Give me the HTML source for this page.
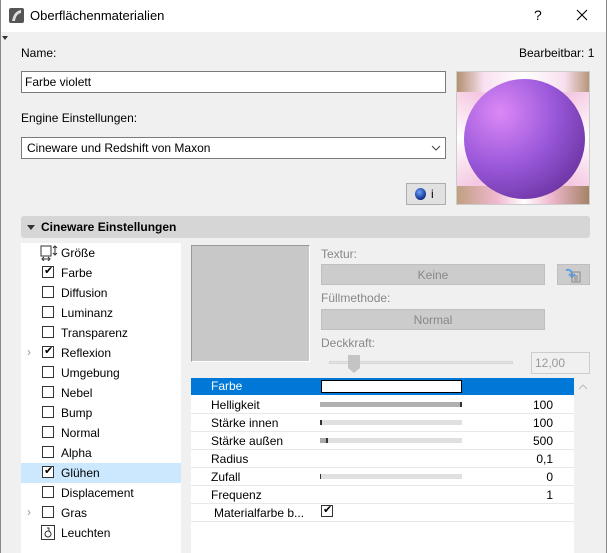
<!DOCTYPE html>
<html><head><meta charset="utf-8"><style>
*{margin:0;padding:0;box-sizing:border-box}
body{width:607px;height:553px;overflow:hidden;background:#f0f0f0;font-family:"Segoe UI","Liberation Sans",sans-serif;font-size:12px;color:#000;position:relative}
.a{position:absolute}
.lbl{position:absolute;font-size:12px;line-height:14px}
.cb{position:absolute;left:42px;width:12px;height:12px;border:1px solid #333;background:#fff}
.li{position:absolute;left:61px;font-size:12px}
.ck{position:absolute;left:44px;font-size:11px}
.row{position:absolute;left:191px;width:383px;height:18px;border-bottom:1px solid #e8e8e8}
.row span{position:absolute;left:20px;top:2px}
.row .v{left:auto;right:21px}
.bar{position:absolute;left:129px;top:6px;width:142px;height:5px;background:#e0e0e0}
</style></head><body>
<div class="a" style="left:0;top:0;width:607px;height:32px;background:#fff"></div>
<div class="a" style="left:0;top:0;width:1px;height:553px;background:#888"></div>
<div class="a" style="left:606px;top:0;width:1px;height:553px;background:#888"></div>
<svg class="a" style="left:9px;top:8px" width="15" height="15"><rect width="15" height="15" rx="2" fill="#555"/><path d="M3 13 Q5 3 12 2 L12 5 Q7 6 6 13Z" fill="#ddd"/></svg>
<div class="lbl" style="left:30px;top:9px;font-size:13px">Oberflächenmaterialien</div>
<div class="lbl" style="left:534px;top:8px;font-size:14px">?</div>
<svg class="a" style="left:576px;top:9px" width="12" height="12"><path d="M1 1L11 11M11 1L1 11" stroke="#000" stroke-width="1.1"/></svg>
<div class="a" style="left:2px;top:36px;width:0;height:0;border-left:3px solid transparent;border-right:3px solid transparent;border-top:4px solid #333"></div>
<div class="lbl" style="left:21px;top:46px">Name:</div>
<div class="lbl" style="left:519px;top:46px">Bearbeitbar: 1</div>
<div class="a" style="left:21px;top:71px;width:425px;height:22px;background:#fff;border:1px solid #7a7a7a"></div>
<div class="lbl" style="left:25px;top:75px">Farbe violett</div>
<div class="lbl" style="left:21px;top:111px">Engine Einstellungen:</div>
<div class="a" style="left:21px;top:137px;width:425px;height:22px;background:#fff;border:1px solid #7a7a7a"></div>
<div class="lbl" style="left:27px;top:141px">Cineware und Redshift von Maxon</div>
<svg class="a" style="left:431px;top:144px" width="10" height="8"><path d="M1 2 L5 6 L9 2" stroke="#444" fill="none"/></svg>
<div class="a" style="left:456px;top:71px;width:134px;height:134px;border:1px solid #ccc;overflow:hidden;background:conic-gradient(from 45deg at 50% 50%,#f4c6e0,#fff,#f4c6e0,#fff,#f4c6e0,#fff,#f4c6e0,#fff,#f4c6e0)">
<div class="a" style="left:0;top:0;width:134px;height:20px;background:linear-gradient(90deg,#b39070,#f8e0f0 20%,#fff 50%,#f8e0f0 80%,#b39070)"></div>
<div class="a" style="left:0;top:114px;width:134px;height:20px;background:linear-gradient(90deg,#c0a080,#f0b8d0 30%,#fff 50%,#f0b8d0 70%,#a08060)"></div>
<div class="a" style="left:7px;top:7px;width:121px;height:120px;border-radius:50%;background:radial-gradient(circle at 30% 28%,#dc88f6,#9a58da 45%,#7038a8 78%,#3e1860)"></div>
</div>
<div class="a" style="left:406px;top:183px;width:40px;height:22px;background:#e1e1e1;border:1px solid #adadad"></div>
<div class="a" style="left:415px;top:188px;width:11px;height:12px;border-radius:50%;background:radial-gradient(circle at 40% 35%,#6aa0ff,#10308a 70%,#000)"></div>
<div class="lbl" style="left:431px;top:187px">i</div>
<div class="a" style="left:21px;top:216px;width:569px;height:22px;background:#d6d6d6;border-radius:3px"></div>
<div class="a" style="left:27px;top:225px;width:0;height:0;border-left:4px solid transparent;border-right:4px solid transparent;border-top:5px solid #333"></div>
<div class="lbl" style="left:41px;top:220px;font-weight:bold">Cineware Einstellungen</div>
<div class="a" style="left:21px;top:243px;width:160px;height:310px;background:#fff"></div>
<div class="a" style="left:21px;top:463px;width:160px;height:20px;background:#cce8ff"></div>
<svg class="a" style="left:40px;top:245px" width="18" height="16"><rect x="1" y="1" width="10" height="10" fill="none" stroke="#333"/><path d="M15 1v9M13 3l2-2 2 2M13 8l2 2 2-2M2 14h8M4 12l-2 2 2 2M8 12l2 2-2 2" stroke="#333" fill="none"/></svg>
<div class="li" style="top:246px">Größe</div>
<div class="cb" style="top:266px"></div><div class="ck" style="top:264px">✔</div><div class="li" style="top:266px">Farbe</div>
<div class="cb" style="top:286px"></div><div class="li" style="top:286px">Diffusion</div>
<div class="cb" style="top:306px"></div><div class="li" style="top:306px">Luminanz</div>
<div class="cb" style="top:326px"></div><div class="li" style="top:326px">Transparenz</div>
<div class="li" style="left:27px;top:345px;color:#999">›</div>
<div class="cb" style="top:346px"></div><div class="ck" style="top:344px">✔</div><div class="li" style="top:346px">Reflexion</div>
<div class="cb" style="top:366px"></div><div class="li" style="top:366px">Umgebung</div>
<div class="cb" style="top:386px"></div><div class="li" style="top:386px">Nebel</div>
<div class="cb" style="top:406px"></div><div class="li" style="top:406px">Bump</div>
<div class="cb" style="top:426px"></div><div class="li" style="top:426px">Normal</div>
<div class="cb" style="top:446px"></div><div class="li" style="top:446px">Alpha</div>
<div class="cb" style="top:466px"></div><div class="ck" style="top:464px">✔</div><div class="li" style="top:466px">Glühen</div>
<div class="cb" style="top:486px"></div><div class="li" style="top:486px">Displacement</div>
<div class="li" style="left:27px;top:505px;color:#999">›</div>
<div class="cb" style="top:506px"></div><div class="li" style="top:506px">Gras</div>
<svg class="a" style="left:41px;top:525px" width="14" height="15"><rect x="0.5" y="0.5" width="13" height="14" fill="none" stroke="#333"/><circle cx="7" cy="9" r="3" fill="none" stroke="#333"/><path d="M6 3h2v3" stroke="#333" fill="none"/></svg>
<div class="li" style="top:526px">Leuchten</div>
<div class="a" style="left:191px;top:245px;width:119px;height:117px;background:#c8c8c8;border:1px solid #999;border-right-color:#fff;border-bottom-color:#fff"></div>
<div class="lbl" style="left:321px;top:247px;color:#888">Textur:</div>
<div class="a" style="left:321px;top:264px;width:224px;height:21px;background:#ccc;border:1px solid #bfbfbf"></div>
<div class="lbl" style="left:321px;width:224px;text-align:center;top:268px;color:#888">Keine</div>
<div class="a" style="left:557px;top:264px;width:33px;height:21px;background:#ccc;border:1px solid #bfbfbf"></div>
<svg class="a" style="left:563px;top:267px" width="22" height="16"><path d="M3 3 Q9 2 9 8" stroke="#5aa0e8" stroke-width="2" fill="none"/><path d="M6 7l3 3 3-3" stroke="#5aa0e8" stroke-width="2" fill="none"/><rect x="9" y="5" width="8" height="10" fill="none" stroke="#888"/><path d="M11 9h4M11 11h4M11 13h4" stroke="#888"/></svg>
<div class="lbl" style="left:321px;top:291px;color:#888">Füllmethode:</div>
<div class="a" style="left:321px;top:309px;width:224px;height:21px;background:#ccc;border:1px solid #bfbfbf"></div>
<div class="lbl" style="left:321px;width:224px;text-align:center;top:313px;color:#888">Normal</div>
<div class="lbl" style="left:321px;top:336px;color:#888">Deckkraft:</div>
<div class="a" style="left:329px;top:361px;width:184px;height:3px;background:#e6e6e6;border:1px solid #d6d6d6"></div>
<div class="a" style="left:348px;top:355px;width:12px;height:13px;background:#c4c4c4"></div>
<div class="a" style="left:348px;top:368px;width:0;height:0;border-left:6px solid transparent;border-right:6px solid transparent;border-top:5px solid #c4c4c4"></div>
<div class="a" style="left:531px;top:352px;width:59px;height:22px;border:1px solid #ccc;background:#f0f0f0"></div>
<div class="lbl" style="left:535px;top:356px;color:#999">12,00</div>
<div class="a" style="left:191px;top:378px;width:383px;height:175px;background:#fff"></div>
<div class="row" style="top:378px;background:#0078d7;color:#fff;border:none;height:17px"><span style="top:1px">Farbe</span><div class="a" style="left:130px;top:2px;width:141px;height:13px;background:#fff;border:1px solid #000"></div></div>
<div class="row" style="top:396px"><span>Helligkeit</span><div class="bar" style="background:#b0b0b0;border-right:2px solid #333"></div><span class="v">100</span></div>
<div class="row" style="top:414px"><span>Stärke innen</span><div class="bar" style="border-left:2px solid #333"></div><span class="v">100</span></div>
<div class="row" style="top:432px"><span>Stärke außen</span><div class="bar"><div class="a" style="left:0;top:0;width:8px;height:5px;background:#aaa;border-right:2px solid #333"></div></div><span class="v">500</span></div>
<div class="row" style="top:450px"><span>Radius</span><span class="v">0,1</span></div>
<div class="row" style="top:468px"><span>Zufall</span><div class="bar" style="border-left:1px solid #333"></div><span class="v">0</span></div>
<div class="row" style="top:486px"><span>Frequenz</span><span class="v">1</span></div>
<div class="row" style="top:504px"><span style="left:23px">Materialfarbe b...</span><div class="a" style="left:130px;top:1px;width:12px;height:12px;border:1px solid #333"></div><div class="a" style="left:132px;top:-1px;font-size:11px">✔</div></div>
<svg class="a" style="left:578px;top:383px" width="10" height="7"><path d="M1 6 L5 2 L9 6" stroke="#bbb" fill="none"/></svg>
</body></html>
